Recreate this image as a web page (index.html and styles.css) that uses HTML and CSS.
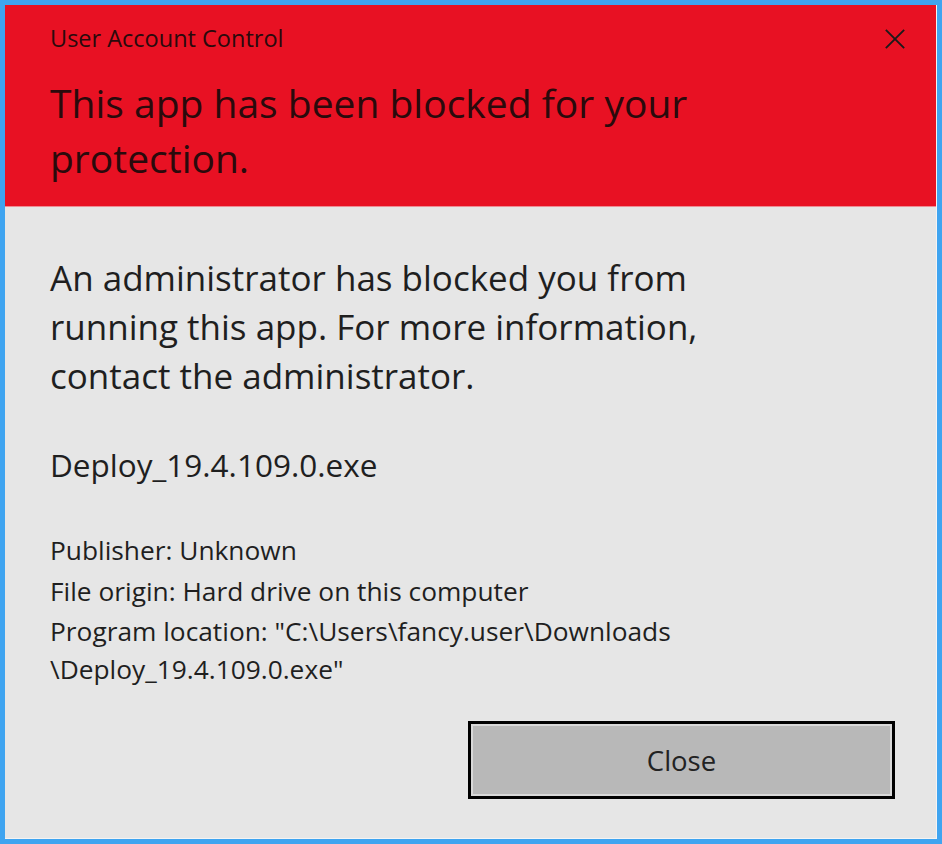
FILE: index.html
```html
<!DOCTYPE html>
<html lang="en">
<head>
<meta charset="utf-8">
<title>User Account Control</title>
<link rel="stylesheet" href="styles.css">
</head>
<body>
<div class="window">
  <div class="inner">
    <header class="header">
      <div class="titlebar">
        <span class="title">User Account Control</span>
        <svg class="close-x" width="24" height="24" viewBox="0 0 24 24" aria-hidden="true">
          <path d="M2 2 L22 22 M22 2 L2 22" stroke="#1a1a1a" stroke-width="2" fill="none"/>
        </svg>
      </div>
      <h1 class="headline">This app has been blocked for your protection.</h1>
    </header>
    <main class="content">
      <p class="message">An administrator has blocked you from running this app. For more information, contact the administrator.</p>
      <p class="filename">Deploy_19.4.109.0.exe</p>
      <div class="details">
        <div class="row">Publisher: Unknown</div>
        <div class="row">File origin: Hard drive on this computer</div>
        <div class="row">Program location: "C:\Users\fancy.user\Downloads<br>\Deploy_19.4.109.0.exe"</div>
      </div>
      <div class="actions">
        <button class="btn">Close</button>
      </div>
    </main>
  </div>
</div>
</body>
</html>
```

FILE: styles.css
```css
html, body {
  margin: 0;
  padding: 0;
  background: #3fa4f0;
}
body {
  font-family: "Open Sans", "Noto Sans", sans-serif;
  color: #1a1a1a;
}
.window {
  width: 942px;
  height: 844px;
  box-sizing: border-box;
  border: 5px solid #3fa4f0;
  background: #3fa4f0;
}
.inner {
  height: 100%;
  box-sizing: border-box;
  background: #e6e6e6;
  border-right: 1px solid #f4f4f4;
  border-bottom: 1px solid #f4f4f4;
  display: flex;
  flex-direction: column;
}
.header {
  background: #e81123;
  height: 202px;
  box-sizing: border-box;
  border-bottom: 1px solid #ee8c94;
  padding: 0 0 0 45px;
}
.titlebar {
  display: flex;
  align-items: center;
  justify-content: space-between;
  height: 64px;
  padding-right: 30px;
}
.title {
  font-size: 23.5px;
  color: #2a0a0c;
  padding-top: 1px;
}
.close-x {
  width: 22px;
  height: 22px;
  margin-top: 4px;
}
.headline {
  margin: 0;
  font-weight: normal;
  font-size: 39px;
  line-height: 55px;
  color: #2a0a0c;
  width: 700px;
  margin-top: 6px;
}
.content {
  flex: 1;
  padding: 46px 45px 0 45px;
}
.message {
  margin: 0;
  font-size: 35px;
  line-height: 49px;
  width: 700px;
  color: #1f1f1f;
}
.filename {
  margin: 45px 0 0 0;
  font-size: 31.5px;
  line-height: 40px;
  color: #1f1f1f;
}
.details {
  margin-top: 46px;
  font-size: 26.3px;
  color: #1f1f1f;
}
.row {
  line-height: 38px;
  margin-bottom: 2.5px;
}
.row:last-child {
  margin-bottom: 0;
}
.actions {
  display: flex;
  justify-content: flex-end;
  margin-top: 33px;
}
.btn {
  width: 427px;
  height: 78px;
  box-sizing: border-box;
  border: 3px solid #000;
  box-shadow: inset 0 0 0 2px #d8d8d8;
  background: #b8b8b8;
  font-family: inherit;
  font-size: 27.5px;
  color: #222;
  margin-right: -4px;
}
```
